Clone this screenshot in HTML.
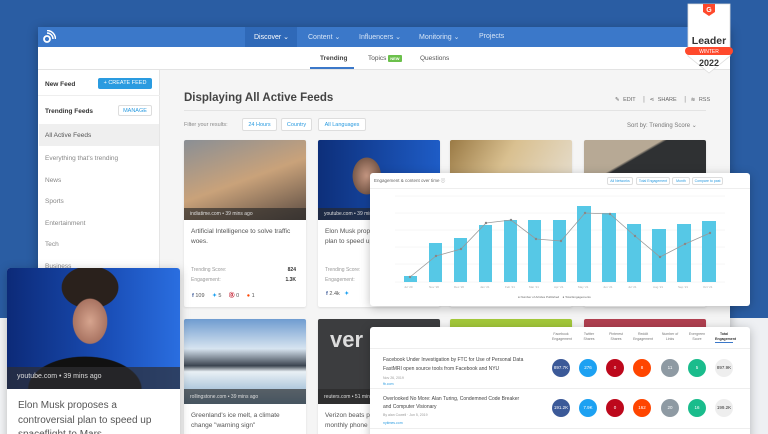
<!DOCTYPE html>
<html style="width:768px;height:434px;overflow:hidden"><head><meta charset="utf-8"><style>
*{margin:0;padding:0;box-sizing:border-box}
body{width:768px;height:434px;overflow:hidden;position:relative;font-family:"Liberation Sans",sans-serif;background:#fff}
.abs{position:absolute}
.bg{left:0;top:0;width:768px;height:434px;background:#2a5da3}
.win{left:38px;top:27px;width:692px;height:407px;background:#f5f5f5;box-shadow:0 2px 10px rgba(0,0,0,.3);overflow:hidden}
.nav{left:0;top:0;width:692px;height:20px;background:#3b78c9}
.nav span{position:absolute;top:6px;font-size:7px;color:#d8e6f7}
.sub{left:0;top:20px;width:692px;height:23px;background:#fff;border-bottom:1px solid #e3e3e3}
.sub span{position:absolute;top:8px;font-size:6.5px;color:#555}
.side{left:0;top:43px;width:122px;height:380px;background:#fff;border-right:1px solid #e5e5e5}
.side .it{position:absolute;left:7px;font-size:6.5px;color:#888}
.btn{position:absolute;font-size:5.5px;color:#2a9be0;background:#fff;border:1px solid #ddd;border-radius:2px;text-align:center}
.card{position:absolute;width:122px;background:#fff;box-shadow:0 1px 2px rgba(0,0,0,.1);border-radius:2px;overflow:hidden}
.card .img{height:80px;position:relative}
.cap{position:absolute;left:0;bottom:0;width:100%;height:12px;background:rgba(40,40,40,.65);color:#ddd;font-size:5px;padding:3px 6px}
.card .t{font-size:6.5px;color:#555;padding:7px 7px 0;line-height:10px}
.pop{background:#fff;border-radius:3px;box-shadow:0 2px 10px rgba(0,0,0,.25)}
.c{position:absolute;width:18px;height:18px;border-radius:50%;font-size:4.5px;color:#fff;text-align:center;line-height:18px}
.sc{position:absolute;left:7px;top:125px;font-size:5px;color:#999;line-height:10px}
.sv{position:absolute;right:10px;top:125px;font-size:5px;color:#333;text-align:right;line-height:10px;font-weight:bold}
.so{position:absolute;left:8px;top:151px;font-size:5.5px;color:#555;white-space:nowrap}
</style></head><body>
<div class="abs bg"></div>
<div class="abs" style="left:0;top:318px;width:40px;height:116px;background:#f4f5f7"></div>
<div class="abs" style="left:730px;top:318px;width:38px;height:116px;background:#eef0f3"></div>
<div class="abs win">
 <div class="abs nav">
  <svg class="abs" style="left:4px;top:3px" width="14" height="14" viewBox="0 0 14 14"><circle cx="5" cy="9" r="3" fill="none" stroke="#fff" stroke-width="1.8"/><path d="M5 3a6 6 0 0 1 6 6M5 0.5a8.5 8.5 0 0 1 8.5 8.5" fill="none" stroke="#fff" stroke-width="1.5"/></svg>
  <div class="abs" style="left:207px;top:0;width:52px;height:20px;background:#2f69b8"></div>
  <span style="left:216px;color:#fff">Discover ⌄</span>
  <span style="left:270px">Content ⌄</span>
  <span style="left:321px">Influencers ⌄</span>
  <span style="left:381px">Monitoring ⌄</span>
  <span style="left:441px">Projects</span>
 </div>
 <div class="abs sub">
  <span style="left:282px;font-weight:bold;color:#444">Trending</span>
  <div class="abs" style="left:272px;top:20px;width:44px;height:2px;background:#3b78c9"></div>
  <span style="left:330px">Topics <b style="background:#6bc04b;color:#fff;font-size:4px;padding:1px 2px;border-radius:1px">NEW</b></span>
  <span style="left:382px">Questions</span>
 </div>
 <div class="abs side">
  <div class="it" style="top:11px;color:#333;font-weight:bold">New Feed</div>
  <div class="btn" style="left:60px;top:8px;width:54px;height:11px;background:#2a9be0;color:#fff;line-height:10px;border:0">+ CREATE FEED</div>
  <div class="abs" style="left:0;top:25px;width:122px;height:1px;background:#eee"></div>
  <div class="it" style="top:38px;color:#333;font-weight:bold">Trending Feeds</div>
  <div class="btn" style="left:80px;top:35px;width:34px;height:11px;line-height:10px">MANAGE</div>
  <div class="abs" style="left:1px;top:54px;width:120px;height:22px;background:#efefef"></div>
  <div class="it" style="top:62px;color:#555">All Active Feeds</div>
  <div class="it" style="top:85px">Everything that's trending</div>
  <div class="it" style="top:107px">News</div>
  <div class="it" style="top:128px">Sports</div>
  <div class="it" style="top:150px">Entertainment</div>
  <div class="it" style="top:171px">Tech</div>
  <div class="it" style="top:193px">Business</div>
 </div>
 <div class="abs" style="left:146px;top:65px;font-size:11.5px;font-weight:bold;color:#444">Displaying All Active Feeds</div>
 <div class="abs" style="left:577px;top:70px;font-size:5.5px;color:#666;word-spacing:2px">✎ EDIT &nbsp;│ ⋖ SHARE &nbsp;│ ≋ RSS</div>
 <div class="abs" style="left:146px;top:83px;width:522px;height:1px;background:#e3e3e3"></div>
 <div class="abs" style="left:146px;top:95px;font-size:5.5px;color:#888">Filter your results:</div>
 <div class="btn" style="left:204px;top:91px;width:35px;height:13px;line-height:12px">24 Hours</div>
 <div class="btn" style="left:243px;top:91px;width:31px;height:13px;line-height:12px">Country</div>
 <div class="btn" style="left:280px;top:91px;width:48px;height:13px;line-height:12px">All Languages</div>
 <div class="abs" style="left:589px;top:95px;font-size:6px;color:#777">Sort by: Trending Score ⌄</div>
</div>
<!-- cards row1 -->
<div class="card" style="left:184px;top:140px;height:167px"><div class="img" style="background:linear-gradient(160deg,#8a8f95,#c9a27a 50%,#5a4b42)"><div class="cap">indiatime.com • 39 mins ago</div></div>
 <div class="t">Artificial Intelligence to solve traffic woes.</div>
 <div class="sc">Trending Score:<br>Engagement:</div>
 <div class="sv">824<br>1.3K</div>
 <div class="so"><b style="color:#3b5998">f</b> 109 &nbsp;&nbsp;&nbsp; <b style="color:#1da1f2">✦</b> 5 &nbsp;&nbsp;&nbsp; <b style="color:#bd081c">⓪</b> 0 &nbsp;&nbsp;&nbsp; <b style="color:#ff4500">●</b> 1</div>
</div>
<div class="card" style="left:318px;top:140px;height:167px"><div class="img" style="background:radial-gradient(ellipse 20px 26px at 40% 45%,#c99a84,#7a5a4a 70%,transparent 72%),linear-gradient(90deg,#0d2f7a,#1e5cc6)"><div class="cap">youtube.com • 39 mins ago</div></div>
 <div class="t">Elon Musk proposes a controversial plan to speed up spaceflight to Mars</div>
 <div class="sc">Trending Score:<br>Engagement:</div>
 <div class="so"><b style="color:#3b5998">f</b> 2.4k &nbsp;&nbsp;<b style="color:#1da1f2">✦</b></div>
</div>
<div class="card" style="left:450px;top:140px;height:167px"><div class="img" style="background:linear-gradient(120deg,#9a7a45,#d9c090 40%,#e8e4dc)"></div></div>
<div class="card" style="left:584px;top:140px;height:167px"><div class="img" style="background:linear-gradient(150deg,#b7a995 0 30%,#2f3133 32%)"></div></div>
<!-- row2 -->
<div class="card" style="left:184px;top:319px;height:120px"><div class="img" style="height:85px;background:linear-gradient(180deg,#6f9cd0,#d7e4f0 35%,#3b4450 55%,#e9f0f5 62%,#7fa7c8)"><div class="cap" style="height:15px;padding-top:5px">rollingstone.com • 39 mins ago</div></div>
 <div class="t">Greenland's ice melt, a climate change "warning sign"</div></div>
<div class="card" style="left:318px;top:319px;height:120px"><div class="img" style="height:85px;background:#3c3d3f"><div class="abs" style="left:12px;top:8px;font-size:22px;font-weight:bold;color:#ddd">ver</div><div class="cap" style="height:15px;padding-top:5px">reuters.com • 51 mins ago</div></div>
 <div class="t">Verizon beats profit estimate, monthly phone</div></div>
<div class="card" style="left:450px;top:319px;height:20px;background:#a3c83a"></div>
<div class="card" style="left:584px;top:319px;height:20px;background:#b04050"></div>
<!-- Elon big card -->
<div class="abs pop" style="left:7px;top:268px;width:173px;height:180px;overflow:hidden;border-radius:3px">
 <div class="abs" style="left:0;top:0;width:173px;height:121px;background:radial-gradient(ellipse 26px 34px at 48% 44%,#d6a48e,#a97462 65%,transparent 68%),radial-gradient(ellipse 40px 30px at 48% 16%,#2a211c 70%,transparent 72%),radial-gradient(ellipse 70px 40px at 45% 100%,#111 80%,transparent 82%),linear-gradient(90deg,#0c2a78,#1a4fb8 60%,#2a6ee0)"></div>
 <div class="abs" style="left:0;top:99px;width:173px;height:22px;background:rgba(45,45,50,.7);color:#ddd;font-size:7px;padding:6px 10px">youtube.com • 39 mins ago</div>
 <div class="abs" style="left:11px;top:131px;font-size:10px;color:#555;line-height:14.5px;width:160px">Elon Musk proposes a<br>controversial plan to speed up<br>spaceflight to Mars</div>
</div>
<!-- chart popup -->
<div class="abs pop" style="left:370px;top:173px;width:380px;height:133px">
 <div class="abs" style="left:4px;top:5px;font-size:4.5px;color:#666">Engagement &amp; content over time ⓘ</div>
 <div class="btn" style="left:237px;top:4px;width:26px;height:8px;font-size:3.5px;line-height:7px">All Networks</div>
 <div class="btn" style="left:266px;top:4px;width:34px;height:8px;font-size:3.5px;line-height:7px">Total Engagement</div>
 <div class="btn" style="left:302px;top:4px;width:18px;height:8px;font-size:3.5px;line-height:7px">Month</div>
 <div class="btn" style="left:322px;top:4px;width:31px;height:8px;font-size:3.5px;line-height:7px">Compare to past</div>
 <div class="abs" style="left:0;top:15px;width:380px;height:1px;background:#eee"></div>
 <svg class="abs" style="left:0;top:0" width="380" height="133">
  <g stroke="#eee" stroke-width=".5"><line x1="25" y1="23" x2="355" y2="23"/><line x1="25" y1="40" x2="355" y2="40"/><line x1="25" y1="57" x2="355" y2="57"/><line x1="25" y1="74" x2="355" y2="74"/><line x1="25" y1="91" x2="355" y2="91"/><line x1="25" y1="109" x2="355" y2="109"/></g>
  <g fill="#56c8e6">
   <rect x="34" y="103" width="13" height="6"/><rect x="59" y="70" width="13" height="39"/><rect x="84" y="65" width="13" height="44"/><rect x="109" y="52" width="13" height="57"/><rect x="134" y="47" width="13" height="62"/><rect x="158" y="47" width="13" height="62"/><rect x="183" y="47" width="13" height="62"/><rect x="207" y="33" width="14" height="76"/><rect x="232" y="40" width="14" height="69"/><rect x="257" y="51" width="14" height="58"/><rect x="282" y="56" width="14" height="53"/><rect x="307" y="51" width="14" height="58"/><rect x="332" y="48" width="14" height="61"/>
  </g>
  <polyline fill="none" stroke="#999" stroke-width=".8" points="40,104 66,83 91,76 116,50 141,47 166,66 191,68 215,40 240,41 265,63 290,84 315,71 340,60"/>
  <g fill="#888"><circle cx="40" cy="104" r="1.2"/><circle cx="66" cy="83" r="1.2"/><circle cx="91" cy="76" r="1.2"/><circle cx="116" cy="50" r="1.2"/><circle cx="141" cy="47" r="1.2"/><circle cx="166" cy="66" r="1.2"/><circle cx="191" cy="68" r="1.2"/><circle cx="215" cy="40" r="1.2"/><circle cx="240" cy="41" r="1.2"/><circle cx="265" cy="63" r="1.2"/><circle cx="290" cy="84" r="1.2"/><circle cx="315" cy="71" r="1.2"/><circle cx="340" cy="60" r="1.2"/></g>
  <g font-size="3" fill="#aaa" font-family="Liberation Sans"><text x="34" y="115">Jul '20</text><text x="59" y="115">Nov '20</text><text x="84" y="115">Dec '20</text><text x="110" y="115">Jan '21</text><text x="135" y="115">Feb '21</text><text x="159" y="115">Mar '21</text><text x="184" y="115">Apr '21</text><text x="208" y="115">May '21</text><text x="233" y="115">Jun '21</text><text x="258" y="115">Jul '21</text><text x="283" y="115">Aug '21</text><text x="308" y="115">Sep '21</text><text x="333" y="115">Oct '21</text>
  <text x="148" y="125" fill="#666">● Number of Articles Published &nbsp;&nbsp; ● Total Engagements</text></g>
 </svg>
</div>
<!-- table popup -->
<div class="abs pop" style="left:370px;top:327px;width:380px;height:120px">
 <div class="abs" style="left:0;top:21px;width:380px;height:1px;background:#eee"></div>
 <div class="abs" style="left:0;top:61px;width:380px;height:1px;background:#eee"></div>
 <div class="abs" style="left:0;top:101px;width:380px;height:1px;background:#eee"></div>
 <div class="abs" style="top:5px;left:0;width:380px;font-size:3.5px;color:#777;line-height:5px">
  <span class="abs" style="left:182px;text-align:center;width:18px">Facebook Engagement</span><span class="abs" style="left:210px;width:18px;text-align:center">Twitter Shares</span><span class="abs" style="left:237px;width:18px;text-align:center">Pinterest Shares</span><span class="abs" style="left:263px;width:20px;text-align:center">Reddit Engagement</span><span class="abs" style="left:291px;width:18px;text-align:center">Number of Links</span><span class="abs" style="left:318px;width:18px;text-align:center">Evergreen Score</span><span class="abs" style="left:345px;width:18px;text-align:center;color:#333;font-weight:bold;border-bottom:1px solid #3b78c9">Total Engagement</span>
 </div>
 <div class="abs" style="left:13px;top:29px;font-size:5px;color:#444;line-height:9px">Facebook Under Investigation by FTC for Use of Personal Data<br>FastMRI open source tools from Facebook and NYU<br><span style="font-size:3.5px;color:#999">Nov 26, 2019</span><br><span style="font-size:3.5px;color:#2a9be0;position:relative;top:-3px">fb.com</span></div>
 <div class="abs" style="left:13px;top:68px;font-size:5px;color:#444;line-height:8px">Overlooked No More: Alan Turing, Condemned Code Breaker<br>and Computer Visionary<br><span style="font-size:3.5px;color:#999">By alan Cowell · Jun 5, 2019</span><br><span style="font-size:3.5px;color:#2a9be0">nytimes.com</span></div>
 <div class="c" style="left:182px;top:32px;background:#3b5998">897.7K</div><div class="c" style="left:209px;top:32px;background:#1da1f2">276</div><div class="c" style="left:236px;top:32px;background:#bd081c">0</div><div class="c" style="left:263px;top:32px;background:#ff4500">8</div><div class="c" style="left:291px;top:32px;background:#8e9aa3">11</div><div class="c" style="left:318px;top:32px;background:#1abc8c">5</div><div class="c" style="left:345px;top:32px;background:#eee;color:#333">897.9K</div>
 <div class="c" style="left:182px;top:72px;background:#3b5998">191.2K</div><div class="c" style="left:209px;top:72px;background:#1da1f2">7.9K</div><div class="c" style="left:236px;top:72px;background:#bd081c">0</div><div class="c" style="left:263px;top:72px;background:#ff4500">162</div><div class="c" style="left:291px;top:72px;background:#8e9aa3">20</div><div class="c" style="left:318px;top:72px;background:#1abc8c">16</div><div class="c" style="left:345px;top:72px;background:#eee;color:#333">199.2K</div>
</div>
<!-- G2 badge -->
<svg class="abs" style="left:684px;top:3px" width="50" height="72" viewBox="0 0 50 72">
 <path d="M4 1H46V53L25 70L4 53Z" fill="#fff" stroke="#ddd" stroke-width=".8"/>
 <path d="M19 1H31V9L25 13L19 9Z" fill="#ff492c"/>
 <text x="25" y="9" font-size="7" font-weight="bold" fill="#fff" text-anchor="middle" font-family="Liberation Sans">G</text>
 <text x="25" y="41" font-size="10.5" font-weight="bold" fill="#333" text-anchor="middle" font-family="Liberation Sans">Leader</text>
 <rect x="1" y="44" width="48" height="8" rx="4" fill="#ff492c"/>
 <text x="25" y="50" font-size="5" fill="#fff" text-anchor="middle" font-family="Liberation Sans">WINTER</text>
 <text x="25" y="63" font-size="9" font-weight="bold" fill="#333" text-anchor="middle" font-family="Liberation Sans">2022</text>
</svg>
</body></html>
